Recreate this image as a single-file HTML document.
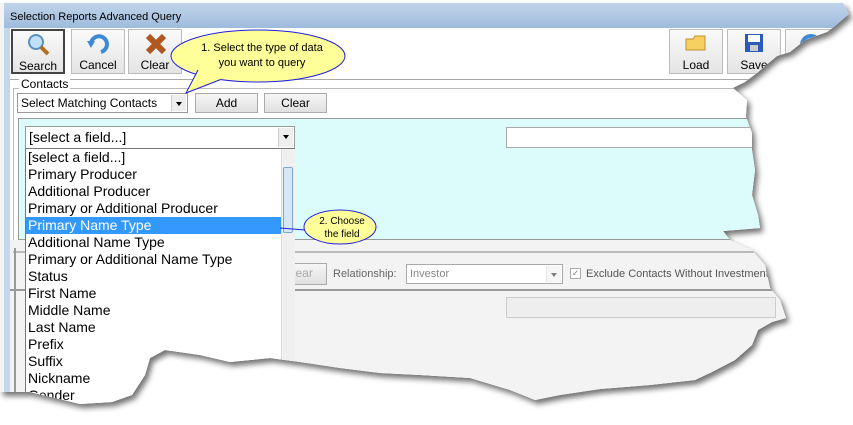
<!DOCTYPE html>
<html><head><meta charset="utf-8"><style>
*{margin:0;padding:0;box-sizing:border-box}
body{width:853px;height:425px;background:#fff;position:relative;overflow:hidden;font-family:"Liberation Sans",sans-serif;font-size:12px;color:#000}
#sh{position:absolute;left:0;top:0;width:853px;height:425px;filter:drop-shadow(3px 4px 3px rgba(0,0,0,.55))}
#win{position:absolute;left:0;top:0;width:853px;height:425px;background:#f4f4f4;
clip-path:polygon(4px 3px,843px 3px,849px 14px,835px 26px,827px 32px,805px 40px,790px 52px,777px 56px,765px 66px,757px 73px,745px 82px,733px 88px,747px 100px,746px 117px,752px 133px,752px 150px,755px 170px,752px 195px,758px 215px,760px 228px,723px 231px,730px 240px,752px 250px,765px 265px,770px 288px,780px 300px,786px 318px,772px 322px,758px 330px,752px 345px,735px 360px,712px 372px,695px 380px,650px 385px,600px 389px,560px 395px,535px 400px,510px 390px,470px 378px,420px 375px,380px 373px,340px 368px,300px 362px,270px 358px,230px 362px,200px 355px,165px 350px,150px 358px,145px 375px,132px 395px,112px 402px,80px 404px,55px 398px,30px 392px,0px 392px,0px 3px)}
.abs{position:absolute}
#title{left:4px;top:3px;width:849px;height:25px;background:linear-gradient(#c0d4ea,#9fbbdc);font-size:11px;padding:8px 0 0 6px}
#lb{left:4px;top:28px;width:6px;height:380px;background:#c5d7ec}
#tool{left:10px;top:28px;width:843px;height:52px;background:#fff;border-bottom:1px solid #aaa}
.tb{position:absolute;top:1px;width:54px;height:45px;background:linear-gradient(#fafafa,#e4e4e4);border:1px solid #bbb;text-align:center;font-size:12px;padding-top:28px}
.grp{border:1px solid #bbb}
.btn{position:absolute;background:linear-gradient(#f6f6f6,#e0e0e0);border:1px solid #aaa;text-align:center;font-size:12px;line-height:18px}
.combo{position:absolute;background:#fff;border:1px solid #999;font-size:12px;padding-left:3px}
.arr{position:absolute;right:1px;top:1px;bottom:1px;width:15px;background:#eee;border-left:1px solid #ccc}
.arr:after{content:"";position:absolute;left:4px;top:7px;border-left:3px solid transparent;border-right:3px solid transparent;border-top:4px solid #000}
#list{left:25px;top:148px;width:270px;height:260px;background:#fff;border:1px solid #777;font-size:14px}
#list div{height:17px;line-height:17px;padding-left:2px;white-space:nowrap}
#list .sel{background:#3399ff;color:#fff;width:255px}
</style></head><body>
<div id="sh"><div id="win">
<div class="abs" id="title">Selection Reports Advanced Query</div>
<div class="abs" id="lb"></div>
<div class="abs" id="tool">
 <div class="tb" style="left:1px;border:2px solid #444">Search
  <svg class="abs" style="left:14px;top:2px" width="24" height="24"><circle cx="9" cy="9" r="7" fill="#bfe0f5" stroke="#5a8fc0" stroke-width="2"/><line x1="14" y1="14" x2="21" y2="21" stroke="#b07020" stroke-width="4"/></svg></div>
 <div class="tb" style="left:61px">Cancel
  <svg class="abs" style="left:15px;top:3px" width="24" height="22"><path d="M4 12 A8 8 0 1 1 14 19" fill="none" stroke="#3a8ad8" stroke-width="4"/><path d="M0 8 L8 8 L4 15Z" fill="#3a8ad8"/></svg></div>
 <div class="tb" style="left:118px">Clear
  <svg class="abs" style="left:15px;top:2px" width="24" height="24"><path d="M4 4 L20 20 M20 4 L4 20" stroke="#b05820" stroke-width="6"/></svg></div>
 <div class="tb" style="left:659px">Load
  <svg class="abs" style="left:15px;top:4px" width="22" height="20"><path d="M1 5 L8 5 L10 2 L20 2 L20 16 L1 16Z" fill="#f6d060" stroke="#c09030"/></svg></div>
 <div class="tb" style="left:717px">Save
  <svg class="abs" style="left:16px;top:3px" width="20" height="20"><rect x="1" y="1" width="18" height="18" fill="#2a5bb8"/><rect x="4" y="2" width="12" height="7" fill="#fff"/><rect x="6" y="12" width="8" height="6" fill="#ccc"/></svg></div>
 <div class="tb" style="left:775px"><svg class="abs" style="left:14px;top:4px" width="22" height="22"><circle cx="11" cy="11" r="9" fill="none" stroke="#3a8ad8" stroke-width="4"/></svg></div>
</div>
<div class="abs" style="left:10px;top:80px;width:843px;height:330px;background:#fff"></div>
<div class="abs grp" style="left:13px;top:88px;width:800px;height:160px"></div>
<div class="abs" style="left:19px;top:77px;background:#fff;padding:0 2px;font-size:12px">Contacts</div>
<div class="combo" style="left:17px;top:93px;width:171px;height:20px;line-height:18px">Select Matching Contacts<div class="arr"></div></div>
<div class="btn" style="left:195px;top:93px;width:63px;height:20px">Add</div>
<div class="btn" style="left:264px;top:93px;width:63px;height:20px">Clear</div>
<div class="abs" style="left:18px;top:118px;width:800px;height:122px;background:#dcfcfc;border:1px solid #999"></div>
<div class="combo" style="left:25px;top:126px;width:270px;height:23px;font-size:14px;line-height:21px">[select a field...]<div class="arr"></div></div>
<div class="abs" style="left:506px;top:127px;width:260px;height:21px;background:#fff;border:1px solid #aaa"></div>
<div class="abs" style="left:10px;top:240px;width:843px;height:170px;background:#f3f3f3"></div>
<div class="abs" style="left:13px;top:251px;width:800px;height:2px;background:#bbb"></div>
<div class="abs" style="left:14px;top:248px;width:2px;height:150px;background:#999"></div>
<div class="btn" style="left:270px;top:263px;width:57px;height:22px;color:#aaa">Clear</div>
<div class="abs" style="left:333px;top:268px;font-size:11px;color:#666">Relationship:</div>
<div class="combo" style="left:406px;top:264px;width:157px;height:20px;color:#888;font-size:11px;line-height:18px;border-color:#aaa">Investor<div class="arr" style="opacity:.5"></div></div>
<div class="abs" style="left:570px;top:268px;width:11px;height:11px;border:1px solid #aaa;background:#fff;font-size:9px;color:#888;line-height:9px;text-align:center">✓</div>
<div class="abs" style="left:586px;top:268px;font-size:11px;color:#555">Exclude Contacts Without Investments</div>
<div class="abs" style="left:10px;top:289px;width:843px;height:2px;background:#999"></div>
<div class="abs" style="left:506px;top:297px;width:270px;height:21px;background:#eee;border:1px solid #ccc"></div>
<div class="abs" id="list">
<div>[select a field...]</div><div>Primary Producer</div><div>Additional Producer</div><div>Primary or Additional Producer</div><div class="sel">Primary Name Type</div><div>Additional Name Type</div><div>Primary or Additional Name Type</div><div>Status</div><div>First Name</div><div>Middle Name</div><div>Last Name</div><div>Prefix</div><div>Suffix</div><div>Nickname</div><div>Gender</div>
<div class="abs" style="left:255px;top:0;width:14px;height:260px;background:#f0f0f0;border-left:1px solid #ddd"></div>
<div class="abs" style="left:257px;top:18px;width:10px;height:66px;background:#d6e8f8;border:1px solid #7ea7d0;border-radius:2px"></div>
</div>
<svg class="abs" style="left:0;top:0" width="853" height="425">
<ellipse cx="258" cy="56" rx="87" ry="26" fill="#ffff99" stroke="#2020e0"/>
<path d="M198 70 L186 93 L222 79" fill="#ffff99" stroke="#2020e0"/>
<path d="M200 69 L222 78" stroke="#ffff99" stroke-width="3"/>
<text x="262" y="51" font-family="Liberation Sans" font-size="11" text-anchor="middle">1. Select the type of data</text>
<text x="262" y="66" font-family="Liberation Sans" font-size="11" text-anchor="middle">you want to query</text>
<path d="M280 228 L305 230" stroke="#2020e0"/>
<ellipse cx="340" cy="227" rx="36" ry="17" fill="#ffff99" stroke="#2020e0"/>
<text x="342" y="224" font-family="Liberation Sans" font-size="10" text-anchor="middle">2. Choose</text>
<text x="342" y="237" font-family="Liberation Sans" font-size="10" text-anchor="middle">the field</text>
</svg>
</div></div>
</body></html>
